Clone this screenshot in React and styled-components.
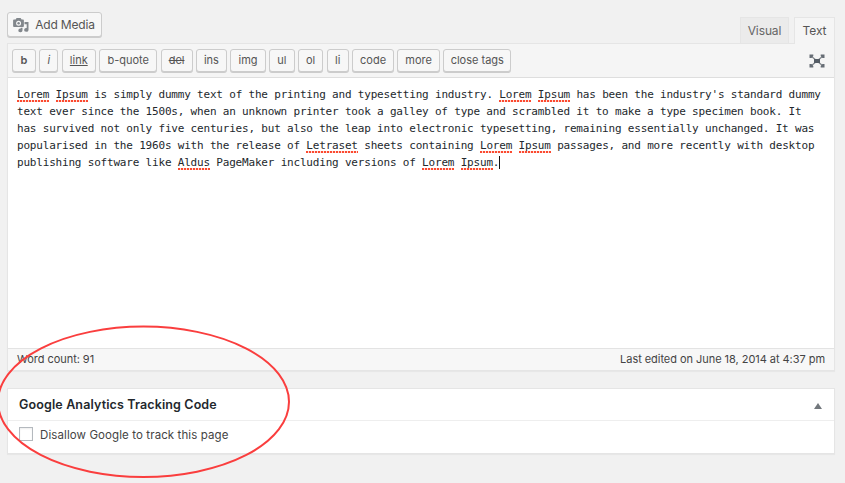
import React from "react";
import styled, { createGlobalStyle } from "styled-components";

const Global = createGlobalStyle`
  *, *::before, *::after { box-sizing: border-box; }
  body { margin: 0; background: #f1f1f1; overflow: hidden; }
  button { font-family: inherit; margin: 0; }
`;

const Page = styled.main`
  position: relative;
  width: 845px;
  height: 483px;
  padding: 12px 10px 0 7px;
  overflow: hidden;
  background: #f1f1f1;
  color: #444;
  font-family: Inter, sans-serif;
  font-size: 12px;
`;

const TopBar = styled.div`
  display: flex;
  justify-content: space-between;
  height: 31px;
`;

const Button = styled.button`
  display: flex;
  align-items: center;
  justify-content: center;
  flex: none;
  padding: 0;
  border: 1px solid #ccc;
  border-radius: 3px;
  background: #f7f7f7;
  box-shadow: 0 1px 0 #ccc;
  color: #555;
  white-space: nowrap;
`;

const MediaButton = styled(Button)`
  width: 95px;
  height: 25px;
  gap: 6px;
  padding-right: 1px;
  font-size: 12px;
  letter-spacing: -0.18px;
`;

const Tabs = styled.div`
  display: flex;
  gap: 5px;
  padding-top: 5px;
`;

const Tab = styled.button`
  position: relative;
  width: ${(p) => p.$width}px;
  height: ${(p) => (p.$active ? 27 : 26)}px;
  padding: 0 0 1px;
  border: 1px solid #e5e5e5;
  border-bottom: 0;
  background: ${(p) => (p.$active ? "#f5f5f5" : "#ebebeb")};
  color: ${(p) => (p.$active ? "#555" : "#666")};
  font-size: 12px;
  letter-spacing: -0.1px;
`;

const Editor = styled.section`
  display: flex;
  flex-direction: column;
  height: 328px;
  border: 1px solid #e5e5e5;
  box-shadow: 0 1px 1px rgba(0, 0, 0, 0.04);
  background: #fff;
`;

const Toolbar = styled.div`
  display: flex;
  align-items: flex-start;
  justify-content: space-between;
  height: 34px;
  padding: 5px 9px 0 4px;
  border-bottom: 1px solid #dedede;
  background: #f5f5f5;
`;

const Tags = styled.div`
  display: flex;
  gap: 3.4px;
`;

const TagButton = styled(Button)`
  width: ${(p) => p.$width}px;
  height: 23px;
  padding-bottom: 1px;
  font-size: 11px;
  font-weight: ${(p) => (p.$look === "bold" ? 600 : 400)};
  font-style: ${(p) => (p.$look === "italic" ? "italic" : "normal")};
  text-decoration: ${(p) =>
    p.$look === "underline" ? "underline" : p.$look === "strike" ? "line-through" : "none"};
`;

const ExpandIcon = styled.svg`
  width: 16px;
  height: 14px;
  margin-top: 5px;
`;

const Copy = styled.div`
  flex: 1;
  padding: 8px 9px;
  color: #23282d;
  font-family: "DejaVu Sans Mono", monospace;
  font-size: 11px;
  letter-spacing: -0.193px;
  line-height: 17px;
  white-space: pre;
`;

const Misspelled = styled.span`
  padding-bottom: 1px;
  background: linear-gradient(90deg, #fb4a30 2px, #fb4a3030 2px) 0 100% / 3px 2px repeat-x;
`;

const Caret = styled.span`
  display: inline-block;
  width: 1px;
  height: 13px;
  background: #111;
  vertical-align: -3px;
`;

const Status = styled.footer`
  display: flex;
  align-items: center;
  justify-content: space-between;
  height: 22px;
  padding: 0 9px 1px;
  border-top: 1px solid #e3e3e3;
  background: #f7f7f7;
  color: #444;
  font-size: 11px;
  letter-spacing: -0.045px;
`;

const Box = styled.section`
  height: 66px;
  margin-top: 17px;
  border: 1px solid #e5e5e5;
  box-shadow: 0 1px 1px rgba(0, 0, 0, 0.04);
  background: #fff;
`;

const BoxHeader = styled.header`
  display: flex;
  align-items: center;
  justify-content: space-between;
  height: 32px;
  padding: 0 12px 0 11px;
  border-bottom: 1px solid #eee;
`;

const BoxTitle = styled.h2`
  margin: 0;
  color: #23282d;
  font-size: 12.5px;
  font-weight: 600;
  letter-spacing: 0.13px;
`;

const Arrow = styled.svg`
  width: 8px;
  height: 6px;
  margin-top: 3px;
`;

const Option = styled.label`
  display: flex;
  align-items: flex-start;
  gap: 7px;
  padding: 6px 11px;
`;

const Check = styled.input`
  appearance: none;
  width: 14px;
  height: 14px;
  margin: 0;
  border: 1px solid #b4b9be;
  background: #fff;
  box-shadow: inset 0 1px 2px rgba(0, 0, 0, 0.07);
`;

const OptionText = styled.span`
  font-size: 11.5px;
  letter-spacing: 0.1px;
  line-height: 16px;
`;

const Highlight = styled.svg`
  position: absolute;
  left: 0;
  top: 320px;
  width: 300px;
  height: 163px;
  pointer-events: none;
`;

const tags = [
  { label: "b", width: 24, look: "bold" },
  { label: "i", width: 19, look: "italic" },
  { label: "link", width: 34, look: "underline" },
  { label: "b-quote", width: 58 },
  { label: "del", width: 32, look: "strike" },
  { label: "ins", width: 31 },
  { label: "img", width: 35.4 },
  { label: "ul", width: 25.4 },
  { label: "ol", width: 25.4 },
  { label: "li", width: 22 },
  { label: "code", width: 42 },
  { label: "more", width: 42.4 },
  { label: "close tags", width: 68 },
];

const lines = [
  "~Lorem~ ~Ipsum~ is simply dummy text of the printing and typesetting industry. ~Lorem~ ~Ipsum~ has been the industry's standard dummy",
  "text ever since the 1500s, when an unknown printer took a galley of type and scrambled it to make a type specimen book. It",
  "has survived not only five centuries, but also the leap into electronic typesetting, remaining essentially unchanged. It was",
  "popularised in the 1960s with the release of ~Letraset~ sheets containing ~Lorem~ ~Ipsum~ passages, and more recently with desktop",
  "publishing software like ~Aldus~ PageMaker including versions of ~Lorem~ ~Ipsum~.",
];

function Line({ text, caret }) {
  return (
    <div>
      {text.split("~").map((part, i) => (i % 2 ? <Misspelled key={i}>{part}</Misspelled> : part))}
      {caret && <Caret />}
    </div>
  );
}

function MediaIcon() {
  return (
    <svg width="16" height="16" viewBox="0 0 16 16" fill="#82878c">
      <path
        fillRule="evenodd"
        d="M1 2.500h1.600L3.600 1h4l1 1.500H10q.9 0 .9.900v5.700q0 .9-.9.900H1q-.9 0-.9-.9V3.400q0-.9.9-.9zM5.600 3.700a2.500 2.500 0 1 0 0 5 2.500 2.500 0 0 0 0-5z"
      />
      <circle cx="5.600" cy="6.200" r="1.200" />
      <path d="M11.500 5H15.500v8a2.200 1.900 0 1 1-1.800-1.900V7.200h-2.200z" />
      <path d="M7.800 10.700h1.700v2.600a2.100 1.900 0 1 1-1.700-1.800z" />
    </svg>
  );
}

export default function App() {
  return (
    <>
      <Global />
      <Page>
        <TopBar>
          <MediaButton>
            <MediaIcon />
            Add Media
          </MediaButton>
          <Tabs>
            <Tab $width={49}>Visual</Tab>
            <Tab $width={41} $active>Text</Tab>
          </Tabs>
        </TopBar>
        <Editor>
          <Toolbar>
            <Tags>
              {tags.map((t) => (
                <TagButton key={t.label} $width={t.width} $look={t.look}>
                  {t.label}
                </TagButton>
              ))}
            </Tags>
            <ExpandIcon viewBox="0 0 16 14">
              <path d="M2 2l12 10M14 2L2 12" stroke="#82878c" strokeWidth="1.300" />
              <path d="M5 5h6v4H5z" fill="#555d66" />
              <path d="M.5.5h3.800v1.500L2.500 4H.5zM15.500.5v3.500h-2L11.700 2V.5zM.5 13.500V10h2l1.800 2v1.500zM15.500 13.500h-3.800V12l1.800-2h2z" fill="#666d75" />
            </ExpandIcon>
          </Toolbar>
          <Copy>
            {lines.map((text, i) => (
              <Line key={i} text={text} caret={i === lines.length - 1} />
            ))}
          </Copy>
          <Status>
            <span>Word count: 91</span>
            <span>Last edited on June 18, 2014 at 4:37 pm</span>
          </Status>
        </Editor>
        <Box>
          <BoxHeader>
            <BoxTitle>Google Analytics Tracking Code</BoxTitle>
            <Arrow viewBox="0 0 8 6">
              <path d="M4 0l4 6H0z" fill="#72777c" />
            </Arrow>
          </BoxHeader>
          <Option>
            <Check type="checkbox" />
            <OptionText>Disallow Google to track this page</OptionText>
          </Option>
        </Box>
        <Highlight viewBox="0 0 300 163">
          <ellipse cx="143.500" cy="81.800" rx="145.500" ry="75.200" fill="none" stroke="#fa3e3e" strokeWidth="2" />
        </Highlight>
      </Page>
    </>
  );
}
